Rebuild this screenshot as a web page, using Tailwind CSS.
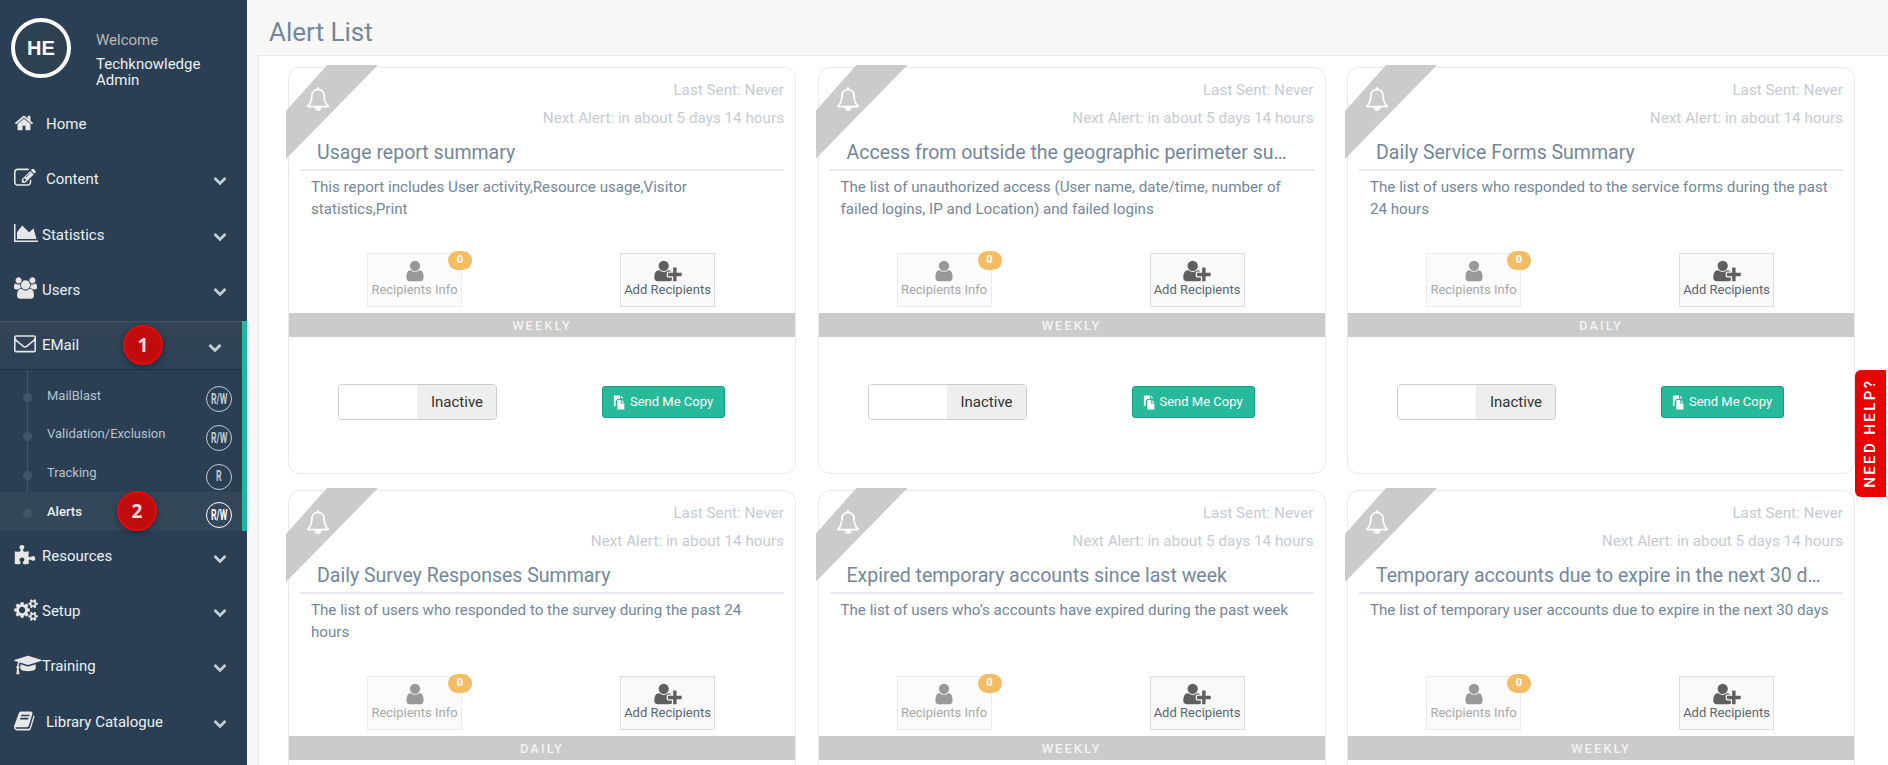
<!DOCTYPE html>
<html lang="en">

<head>
  <meta charset="UTF-8">
  <script src="https://cdn.jsdelivr.net/npm/@tailwindcss/browser@4"></script>
  <title>Alert List</title>
</head>

<body class="font-[Roboto,sans-serif] bg-[#f7f7f7] text-[#73879c] overflow-hidden h-screen">
  <svg class="hidden">
    <symbol id="i-home" viewBox="0 0 1792 1792"><path d="M1472 992v480q0 26-19 45t-45 19h-384v-384h-256v384h-384q-26 0-45-19t-19-45v-480q0-1 .5-3t.5-3l575-474 575 474q1 2 1 6zm223-69l-62 74q-8 9-21 11h-3q-13 0-21-7l-692-577-692 577q-12 8-24 7-13-2-21-11l-62-74q-8-10-7-23.5t11-21.5l719-599q32-26 76-26t76 26l244 204v-195q0-14 9-23t23-9h192q14 0 23 9t9 23v408l219 182q10 8 11 21.5t-7 23.5z"/></symbol>
    <symbol id="i-edit" viewBox="0 0 1792 1792"><path d="M888 1184l116-116-152-152-116 116v56h96v96h56zm440-720q-16-16-33 1l-350 350q-17 17-1 33t33-1l350-350q17-17 1-33zm80 594v190q0 119-84.5 203.5t-203.5 84.5h-832q-119 0-203.5-84.5t-84.5-203.5v-832q0-119 84.5-203.5t203.5-84.5h832q63 0 117 25 15 7 18 23 3 17-9 29l-49 49q-14 14-32 8-23-6-45-6h-832q-66 0-113 47t-47 113v832q0 66 47 113t113 47h832q66 0 113-47t47-113v-126q0-13 9-22l64-64q15-15 35-7t20 29zm-96-738l288 288-672 672h-288v-288zm444 132l-92 92-288-288 92-92q28-28 68-28t68 28l152 152q28 28 28 68t-28 68z"/></symbol>
    <symbol id="i-chart" viewBox="0 0 2048 1792"><path d="M2048 1536v128h-2048v-1536h128v1408h1920zm-384-1024l256 896h-1664v-576l448-576 576 576z"/></symbol>
    <symbol id="i-users" viewBox="0 0 1920 1792"><path d="M593 896q-162 5-265 128h-134q-82 0-138-40.5t-56-118.5q0-353 124-353 6 0 43.5 21t97.5 42.5 119 21.5q67 0 133-23-5 37-5 66 0 139 81 256zm1071 637q0 120-73 189.5t-194 69.5h-874q-121 0-194-69.5t-73-189.5q0-53 3.5-103.5t14-109 26.5-108.5 43-97.5 62-81 85.5-53.5 111.5-20q10 0 43 21.5t73 48 107 48 135 21.5 135-21.5 107-48 73-48 43-21.5q61 0 111.5 20t85.5 53.5 62 81 43 97.5 26.5 108.5 14 109 3.5 103.5zm-1024-1277q0 106-75 181t-181 75-181-75-75-181 75-181 181-75 181 75 75 181zm704 384q0 159-112.5 271.5t-271.5 112.5-271.5-112.5-112.5-271.5 112.5-271.5 271.5-112.5 271.5 112.5 112.5 271.5zm576 225q0 78-56 118.5t-138 40.5h-134q-103-123-265-128 81-117 81-256 0-29-5-66 66 23 133 23 59 0 119-21.5t97.5-42.5 43.5-21q124 0 124 353zm-128-609q0 106-75 181t-181 75-181-75-75-181 75-181 181-75 181 75 75 181z"/></symbol>
    <symbol id="i-mail" viewBox="0 0 1792 1792"><path d="M1664 1504v-768q-32 36-69 66-268 206-426 338-51 43-83 67t-86.5 48.5-102.5 24.5h-2q-48 0-102.5-24.5t-86.5-48.5-83-67q-158-132-426-338-37-30-69-66v768q0 13 9.5 22.5t22.5 9.5h1472q13 0 22.5-9.5t9.5-22.5zm0-1051v-24.5l-.5-13-3-12.5-5.5-9-9-7.5-14-2.5h-1472q-13 0-22.5 9.5t-9.5 22.5q0 168 147 284 193 152 401 317 6 5 35 29.5t46 37.5 44.5 31.5 50.5 27.5 43 9h2q20 0 43-9t50.5-27.5 44.5-31.5 46-37.5 35-29.5q208-165 401-317 54-43 100.5-115.5t46.5-131.5zm128-37v1088q0 66-47 113t-113 47h-1472q-66 0-113-47t-47-113v-1088q0-66 47-113t113-47h1472q66 0 113 47t47 113z"/></symbol>
    <symbol id="i-puzzle" viewBox="0 0 1792 1792"><path d="M1728 1098q0 81-44.5 135t-123.5 54q-41 0-77.5-17.5t-59-38-56.5-38-71-17.5q-110 0-110 124 0 39 16 115t15 115v5q-22 0-33 1-34 3-97.5 11.5t-115.5 13.5-98 5q-61 0-103-26.5t-42-83.5q0-37 17.5-71t38-56.5 38-59 17.5-77.5q0-79-54-123.5t-135-44.5q-84 0-143 45.5t-59 127.5q0 43 15 83t33.5 64.5 33.5 53 15 50.5q0 45-46 89-37 35-117 35-95 0-245-24-9-2-27.5-4t-27.5-4l-13-2q-1 0-3-1-2 0-2-1v-1024q2 1 17.5 3.5t34 5 21.5 3.5q150 24 245 24 80 0 117-35 46-44 46-89 0-22-15-50.5t-33.5-53-33.5-64.5-15-83q0-82 59-127.5t144-45.5q80 0 134 44.5t54 123.5q0 41-17.5 77.5t-38 59-38 56.5-17.5 71q0 57 42 83.5t103 26.5q64 0 180-15t163-17v2q-1 2-3.5 17.5t-5 34-3.5 21.5q-24 150-24 245 0 80 35 117 44 46 89 46 22 0 50.5-15t53-33.5 64.5-33.5 83-15q82 0 127.5 59t45.5 143z"/></symbol>
    <symbol id="i-cogs" viewBox="0 0 1920 1792"><path d="M896 896q0-106-75-181t-181-75-181 75-75 181 75 181 181 75 181-75 75-181zm768 512q0-52-38-90t-90-38-90 38-38 90q0 53 37.5 90.5t90.5 37.5 90.5-37.5 37.5-90.5zm0-1024q0-52-38-90t-90-38-90 38-38 90q0 53 37.5 90.5t90.5 37.5 90.5-37.5 37.5-90.5zm-384 421v185q0 10-7 19.5t-16 10.5l-155 24q-11 35-32 76 34 48 90 115 7 11 7 20 0 12-7 19-23 30-82.5 89.5t-78.5 59.5q-11 0-21-7l-115-90q-37 19-77 31-11 108-23 155-7 24-30 24h-186q-11 0-20-7.5t-10-17.5l-23-153q-34-10-75-31l-118 89q-7 7-20 7-11 0-21-8-144-133-144-160 0-9 7-19 10-14 41-53t47-61q-23-44-35-82l-152-24q-10-1-17-9.5t-7-19.5v-185q0-10 7-19.5t16-10.5l155-24q11-35 32-76-34-48-90-115-7-11-7-20 0-12 7-20 22-30 82-89t79-59q11 0 21 7l115 90q34-18 77-32 11-108 23-154 7-24 30-24h186q11 0 20 7.5t10 17.5l23 153q34 10 75 31l118-89q8-7 20-7 11 0 21 8 144 133 144 160 0 8-7 19-12 16-42 54t-45 60q23 48 34 82l152 23q10 2 17 10.5t7 19.5zm640 533v140q0 16-149 31-12 27-30 52 51 113 51 138 0 4-4 7-122 71-124 71-8 0-46-47t-52-68q-20 2-30 2t-30-2q-14 21-52 68t-46 47q-2 0-124-71-4-3-4-7 0-25 51-138-18-25-30-52-149-15-149-31v-140q0-16 149-31 13-29 30-52-51-113-51-138 0-4 4-7 4-2 35-20t59-34 30-16q8 0 46 46.5t52 67.5q20-2 30-2t30 2q51-71 92-112l6-2q4 0 124 70 4 3 4 7 0 25-51 138 17 23 30 52 149 15 149 31zm0-1024v140q0 16-149 31-12 27-30 52 51 113 51 138 0 4-4 7-122 71-124 71-8 0-46-47t-52-68q-20 2-30 2t-30-2q-14 21-52 68t-46 47q-2 0-124-71-4-3-4-7 0-25 51-138-18-25-30-52-149-15-149-31v-140q0-16 149-31 13-29 30-52-51-113-51-138 0-4 4-7 4-2 35-20t59-34 30-16q8 0 46 46.5t52 67.5q20-2 30-2t30 2q51-71 92-112l6-2q4 0 124 70 4 3 4 7 0 25-51 138 17 23 30 52 149 15 149 31z"/></symbol>
    <symbol id="i-cap" viewBox="0 0 2304 1792"><path d="M1774 836l18 316q4 69-82 128t-235 93.5-323 34.5-323-34.5-235-93.5-82-128l18-316 574 181q22 7 48 7t48-7zm530-324q0 23-22 31l-1120 352q-4 1-10 1t-10-1l-652-206q-43 34-71 111.5t-34 178.5q63 36 63 109 0 69-58 107l58 433q2 14-8 25-9 11-24 11h-192q-15 0-24-11-10-11-8-25l58-433q-58-38-58-107 0-73 65-111 11-207 98-330l-333-104q-22-8-22-31t22-31l1120-352q4-1 10-1t10 1l1120 352q22 8 22 31z"/></symbol>
    <symbol id="i-book" viewBox="0 0 1792 1792"><path d="M1639 478q40 57 18 129l-275 906q-19 64-76.5 107.5t-122.5 43.5h-923q-77 0-148.5-53.5t-99.5-131.5q-24-67-2-127 0-4 3-27t4-37q1-8-3-21.5t-3-19.5q2-11 8-21t16.5-23.5 16.5-23.5q23-38 45-91.5t30-91.5q3-10 .5-30t-.5-28q3-11 17-28t17-23q21-36 42-92t25-90q1-9-2.5-32t.5-28q4-13 22-30.5t22-22.5q19-26 42.5-84.5t27.5-96.5q1-8-3-25.5t-2-26.5q2-8 9-18t18-23 17-21q8-12 16.5-30.5t15-35 16-36 19.5-32 26.5-23.5 36-11.5 47.5 5.5l-1 3q38-9 51-9h761q74 0 114 56t18 130l-274 906q-36 119-71.5 153.5t-128.5 34.5h-869q-27 0-38 15-11 16-1 43 24 70 144 70h923q29 0 56-15.5t35-41.5l300-987q7-22 5-57 38 15 59 43zm-1064 2q-4 13 2 22.5t20 9.5h608q13 0 25.5-9.5t16.5-22.5l21-64q4-13-2-22.5t-20-9.5h-608q-13 0-25.5 9.5t-16.5 22.5zm-83 256q-4 13 2 22.5t20 9.5h608q13 0 25.5-9.5t16.5-22.5l21-64q4-13-2-22.5t-20-9.5h-608q-13 0-25.5 9.5t-16.5 22.5z"/></symbol>
    <symbol id="i-down" viewBox="0 0 1792 1792"><path d="M1683 808l-742 741q-19 19-45 19t-45-19l-742-741q-19-19-19-45.5t19-45.5l166-165q19-19 45-19t45 19l531 531 531-531q19-19 45-19t45 19l166 165q19 19 19 45.5t-19 45.5z"/></symbol>
    <symbol id="i-bell" viewBox="0 0 1792 1792"><path d="M912 1696q0-16-16-16-59 0-101.5-42.5t-42.5-101.5q0-16-16-16t-16 16q0 73 51.5 124.5t124.5 51.5q16 0 16-16zm-666-288h1300q-266-300-266-832 0-51-24-105t-69-103-121.5-80.5-169.5-31.5-169.5 31.5-121.5 80.5-69 103-24 105q0 532-266 832zm1482 0q0 52-38 90t-90 38h-448q0 106-75 181t-181 75-181-75-75-181h-448q-52 0-90-38t-38-90q50-42 91-88t85-119.5 74.5-158.5 50-206 19.5-260q0-152 117-282.5t307-158.5q-8-19-8-39 0-40 28-68t68-28 68 28 28 68q0 20-8 39 190 28 307 158.5t117 282.5q0 139 19.5 260t50 206 74.5 158.5 85 119.5 91 88z"/></symbol>
    <symbol id="i-user" viewBox="0 0 1792 1792"><path d="M1536 1399q0 109-62.5 187t-150.5 78h-854q-88 0-150.5-78t-62.5-187q0-85 8.5-160.5t31.5-152 58.5-131 94-89 134.5-34.5q131 128 313 128t313-128q76 0 134.5 34.5t94 89 58.5 131 31.5 152 8.5 160.5zm-256-887q0 159-112.5 271.5t-271.5 112.5-271.5-112.5-112.5-271.5 112.5-271.5 271.5-112.5 271.5 112.5 112.5 271.5z"/></symbol>
    <symbol id="i-userplus" viewBox="0 0 2048 1792"><path d="M704 896q-159 0-271.5-112.5t-112.5-271.5 112.5-271.5 271.5-112.5 271.5 112.5 112.5 271.5-112.5 271.5-271.5 112.5zm960 128h352q13 0 22.5 9.5t9.5 22.5v192q0 13-9.5 22.5t-22.5 9.5h-352v352q0 13-9.5 22.5t-22.5 9.5h-192q-13 0-22.5-9.5t-9.5-22.5v-352h-352q-13 0-22.5-9.5t-9.5-22.5v-192q0-13 9.5-22.5t22.5-9.5h352v-352q0-13 9.5-22.5t22.5-9.5h192q13 0 22.5 9.5t9.5 22.5v352zm-736 224q0 52 38 90t90 38h256v238q-68 50-171 50h-874q-121 0-194-69.5t-73-189.5q0-53 3.5-103.5t14-109 26.5-108.5 43-97.5 62-81 85.5-53.5 111.5-20q19 0 39 17 79 61 154.5 91.5t164.5 30.5 164.5-30.5 154.5-91.5q20-17 39-17 132 0 217 96h-223q-52 0-90 38t-38 90v192z"/></symbol>
    <symbol id="i-files" viewBox="0 0 16 16"><path d="M1 0h7v4H5L3 6v6H1zM9 0l3 3H9z"/><path d="M5 5h4v4h4v7H5zM10 5l3 3h-3z"/></symbol>
  </svg>

  <div class="flex h-screen">
    <!-- sidebar -->
    <aside class="w-[247px] shrink-0 h-full bg-[#2a3f54] relative">
      <div class="h-[96px] flex">
        <div class="ml-[11px] mt-[18px] w-[60px] h-[60px] rounded-full border-[4px] border-white bg-[#2e4150] flex items-center justify-center text-white font-bold text-[20px] font-['Liberation_Sans',sans-serif]">HE</div>
        <div class="ml-[25px] pt-[31px] text-[15px]">
          <div class="text-[#bab8b8] leading-[18px] mb-[7px]">Welcome</div>
          <div class="text-[#ecf0f1] leading-[16px]">Techknowledge<br>Admin</div>
        </div>
      </div>
      <nav id="nav-top"></nav>

      <div class="relative mt-[3px]">
        <div class="w-[5px] absolute right-0 top-0 bottom-0 bg-[#1abb9c]"></div>
        <div class="h-[49px] mr-[5px] flex items-center border-t border-t-[#425668] border-b border-b-[#1f2f3e] bg-linear-to-b from-[#334556] to-[#2c4257] relative">
          <svg class="w-[22px] h-[22px] ml-[14px] -mt-[5px] fill-[#e7e7e7]"><use href="#i-mail"/></svg>
          <span class="ml-[6px] text-[15px] text-[#ecf0f1]">EMail</span>
          <svg class="w-[14px] h-[14px] absolute left-[208px] top-[18px] fill-[#c6ced6]"><use href="#i-down"/></svg>
          <div class="absolute left-[123px] top-[3px] w-[40px] h-[40px] rounded-full bg-[#c00c0c] border-2 border-[#e30b0b] shadow-[0_2px_6px_rgba(0,0,0,0.35)] flex items-center justify-center text-[#f9dcdc] text-[19px] font-bold font-['Open_Sans',sans-serif]">1</div>
        </div>
        <ul id="nav-sub" class="relative mr-[5px] pt-[6px]">
          <li class="absolute left-[27px] top-0 bottom-0 w-px bg-[#425668]"></li>
        </ul>
      </div>
      <nav id="nav-bottom"></nav>
    </aside>

    <!-- main -->
    <main class="flex-1 min-w-0 h-full">
      <h1 class="h-[55px] pl-[22px] pt-[14px] text-[26px] leading-[36px] text-[#73879c]">Alert List</h1>
      <div id="cards" class="ml-[11px] h-[710px] bg-white border-t border-l border-[#e6e9ed] pl-[29px] pt-[11px] grid grid-cols-[508px_508px_508px] gap-x-[21.5px] gap-y-[16px] content-start overflow-hidden"></div>
    </main>
  </div>

  <a class="absolute right-[2px] top-[370px] w-[31px] h-[127px] bg-[#eb0000] rounded-l-[6px] flex items-center justify-center">
    <span class="-rotate-90 whitespace-nowrap text-white text-[15px] font-medium tracking-[2.4px]">NEED HELP?</span>
  </a>

  <script>
    const topItems = [
      { name: 'Home', icon: 'i-home', box: 'w-[20px] h-[20px] -mt-[2px]', gap: 'ml-[12px]' },
      { name: 'Content', icon: 'i-edit', box: 'w-[22px] h-[22px] -mt-[3px]', gap: 'ml-[10px]', arrow: true },
      { name: 'Statistics', icon: 'i-chart', box: 'w-[24px] h-[22px] -mt-[4px]', gap: 'ml-[4px]', arrow: true },
      { name: 'Users', icon: 'i-users', box: 'w-[23px] h-[22px] -mt-[4px]', gap: 'ml-[5px]', arrow: true }
    ];
    const bottomItems = [
      { name: 'Resources', icon: 'i-puzzle', box: 'w-[22px] h-[22px] -mt-[2px]', gap: 'ml-[6px]', arrow: true, row: 'h-[52px] pb-[1px]' },
      { name: 'Setup', icon: 'i-cogs', box: 'w-[24px] h-[22px] -mt-[1px]', gap: 'ml-[4px]', arrow: true },
      { name: 'Training', icon: 'i-cap', box: 'w-[28px] h-[24px] -mt-[2px]', gap: 'ml-[0px]', arrow: true },
      { name: 'Library Catalogue', icon: 'i-book', box: 'w-[22px] h-[22px] -mt-[2px]', gap: 'ml-[10px]', arrow: true }
    ];

    function navRow(it) {
      return `<a class="${it.row || 'h-[55.5px]'} flex items-center relative text-[15px] text-[#ecf0f1]">
        <svg class="${it.box} ml-[14px] fill-[#e7e7e7] shrink-0"><use href="#${it.icon}"/></svg>
        <span class="${it.gap}">${it.name}</span>
        ${it.arrow ? '<svg class="w-[14px] h-[14px] absolute left-[213px] top-[50%] -translate-y-[6px] fill-[#c6ced6]"><use href="#i-down"/></svg>' : ''}
      </a>`;
    }
    document.getElementById('nav-top').innerHTML = topItems.map(navRow).join('');
    document.getElementById('nav-bottom').innerHTML = bottomItems.map(navRow).join('');

    const subItems = [
      { name: 'MailBlast', perm: 'R/W' },
      { name: 'Validation/Exclusion', perm: 'R/W' },
      { name: 'Tracking', perm: 'R' },
      { name: 'Alerts', perm: 'R/W', active: true }
    ];
    document.getElementById('nav-sub').insertAdjacentHTML('beforeend', subItems.map(s => `
      <li class="h-[38.75px] flex relative ${s.active ? 'bg-[#34475a]' : ''}">
        <span class="absolute left-[23px] top-[17px] w-[9px] h-[9px] rounded-full bg-[#425668]"></span>
        <span class="ml-[47px] mt-[10.6px] text-[13px] leading-[18px] ${s.active ? 'text-[#ecf0f1] font-medium' : 'text-[#b8c2cc]'}">${s.name}</span>
        <span class="absolute left-[206px] top-[10px] w-[26px] h-[26px] rounded-full border-[1.5px] ${s.active ? 'border-white text-white' : 'border-[#c3ccd4] text-[#c3ccd4]'} flex items-center justify-center text-[15px] font-bold"><span class="scale-x-[58%] whitespace-nowrap">${s.perm}</span></span>
        ${s.active ? `<div class="absolute left-[117px] top-[-1px] w-[40px] h-[40px] rounded-full bg-[#c00c0c] border-2 border-[#e30b0b] shadow-[0_2px_6px_rgba(0,0,0,0.35)] flex items-center justify-center text-[#f9dcdc] text-[19px] font-bold font-['Open_Sans',sans-serif]">2</div>` : ''}
      </li>`).join(''));

    const alertas = [
      { title: 'Usage report summary', next: 'in about 5 days 14 hours', desc: 'This report includes User activity,Resource usage,Visitor statistics,Print', freq: 'WEEKLY' },
      { title: 'Access from outside the geographic perimeter summary', next: 'in about 5 days 14 hours', desc: 'The list of unauthorized access (User name, date/time, number of failed logins, IP and Location) and failed logins', freq: 'WEEKLY' },
      { title: 'Daily Service Forms Summary', next: 'in about 14 hours', desc: 'The list of users who responded to the service forms during the past 24 hours', freq: 'DAILY' },
      { title: 'Daily Survey Responses Summary', next: 'in about 14 hours', desc: 'The list of users who responded to the survey during the past 24 hours', freq: 'DAILY' },
      { title: 'Expired temporary accounts since last week', next: 'in about 5 days 14 hours', desc: 'The list of users who’s accounts have expired during the past week', freq: 'WEEKLY' },
      { title: 'Temporary accounts due to expire in the next 30 days', next: 'in about 5 days 14 hours', desc: 'The list of temporary user accounts due to expire in the next 30 days', freq: 'WEEKLY' }
    ];

    document.getElementById('cards').innerHTML = alertas.map(a => `
      <div class="relative h-[407px] bg-white border border-[#e6e9ed] rounded-[12px]">
        <div class="absolute left-[-3px] top-[-3px] w-[92px] h-[94px] bg-[#cbcbcb] [clip-path:polygon(41px_0,92px_0,0_94px,0_46px)]"></div>
        <svg class="absolute left-[17px] top-[19px] w-[24px] h-[24px] fill-white"><use href="#i-bell"/></svg>
        <div class="pt-[10px] pr-[11px] text-right text-[15.25px] leading-[24px] text-[#c4cbd4]">
          <div>Last Sent: Never</div>
          <div class="mt-[4px]">Next Alert: ${a.next}</div>
        </div>
        <div class="mx-[11px] mt-[9px] h-[32px] pt-[2px] pl-[17px] pr-[18px] border-b-2 border-[#e6e9ed] text-[19.5px] leading-[24px] truncate">${a.title}</div>
        <p class="ml-[22px] mr-[20px] mt-[5px] text-[15.15px] leading-[22px] h-[44px]">${a.desc}</p>
        <div class="absolute left-[78px] top-[185px] w-[95px] h-[54px] bg-[#fbfbfb] border border-[#ececec] text-[#a9a9a9] text-[13px] flex flex-col items-center pt-[5px]">
          <svg class="w-[24px] h-[24px] fill-[#999] shrink-0"><use href="#i-user"/></svg>
          <span class="-mt-[2px] leading-[18px] whitespace-nowrap">Recipients Info</span>
          <span class="absolute right-[-11px] top-[-3px] w-[24px] h-[19px] rounded-[10px] bg-[#f5bd63] text-white text-[11px] font-bold flex items-center justify-center">0</span>
        </div>
        <div class="absolute left-[331px] top-[185px] w-[95px] h-[54px] bg-[#f9f9f9] border border-[#dddddd] text-[#5a6674] text-[13px] flex flex-col items-center pt-[5px]">
          <svg class="w-[28px] h-[24px] fill-[#5f5f5f] shrink-0"><use href="#i-userplus"/></svg>
          <span class="-mt-[2px] leading-[18px] whitespace-nowrap">Add Recipients</span>
        </div>
        <div class="absolute left-0 right-0 top-[245px] h-[24px] pt-[1px] bg-[#cbcbcb] text-[#f3f3f3] text-[13px] font-medium tracking-[2px] flex items-center justify-center">${a.freq}</div>
        <div class="absolute left-[49px] top-[316px] w-[159px] h-[36px] flex rounded-[4px] border border-[#cccccc] overflow-hidden text-[15px] text-[#333]">
          <span class="w-[78px] bg-white"></span>
          <span class="flex-1 bg-[#eeeeee] flex items-center pl-[14px]">Inactive</span>
        </div>
        <button class="absolute left-[313px] top-[318px] w-[123px] h-[32px] pl-[10px] rounded-[3px] bg-[#26b99a] border border-[#169f85] text-white text-[13px] flex items-center gap-[3px]">
          <svg class="w-[14px] h-[15px] fill-white"><use href="#i-files"/></svg>Send Me Copy
        </button>
      </div>`).join('');
  </script>
</body>

</html>
